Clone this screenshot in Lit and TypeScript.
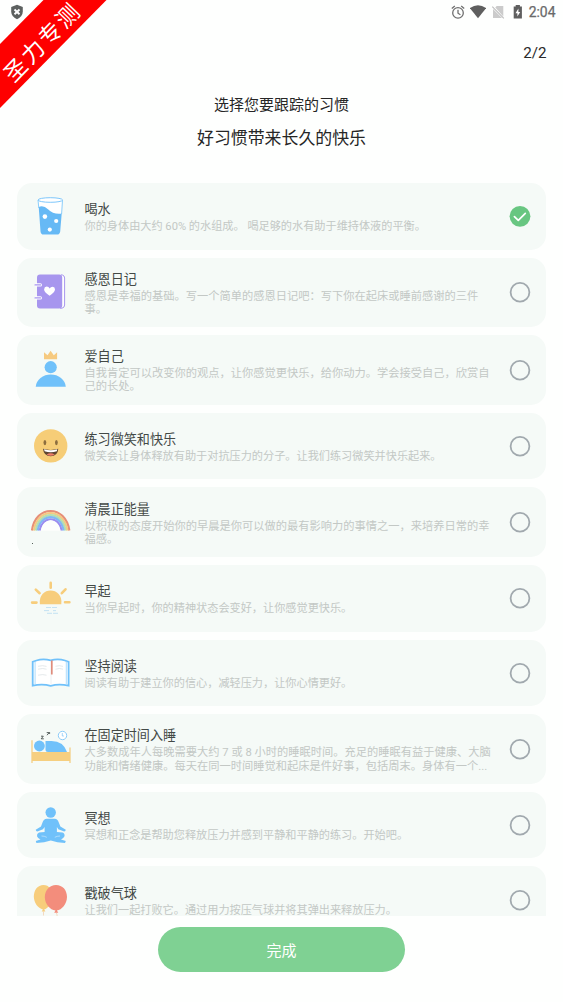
import { LitElement, html, svg, css } from "lit";
import { customElement, property, state } from "lit/decorators.js";

const BLUE = "#70c1fa";
const YELLOW = "#f7cd7c";

const icons: Record<string, unknown> = {
  water: svg`
    <path d="M9 6.5 11.6 38.5Q11.9 41.4 14.5 41.4H28Q30.6 41.4 31 38.5L33.5 6.5Z" fill="#fff"/>
    <path d="M9.7 14Q14.5 12 19 16.2 24.5 21.8 32.7 20.6L31.2 38.4Q30.8 41.5 28 41.5H14.6Q11.8 41.5 11.5 38.4Z" fill="#66b9f5"/>
    <path d="M9 7 9.8 15M33.5 7 32.6 21" stroke="#70c1fa" fill="none" stroke-width=".8"/>
    <ellipse cx="21.3" cy="7" rx="12.3" ry="2.3" fill="#fff" stroke="#70c1fa" stroke-width=".9"/>
    <circle cx="15.9" cy="23.6" r="2.3" fill="#fff"/><circle cx="27.2" cy="28" r="2.1" fill="#fff"/><circle cx="20.8" cy="36.6" r="2.1" fill="#fff"/>`,
  journal: svg`
    <path d="M32 5.9H33.2Q35.6 6.6 35.6 9V36Q35.6 38.6 33 39.2H31" fill="#fff" stroke="#a796ee" stroke-width="1"/>
    <rect x="8" y="5.5" width="25.2" height="34" rx="3" fill="#a796ee"/>
    <rect x="5.5" y="14.2" width="7.5" height="3.4" rx="1.7" fill="#fff"/><rect x="5.5" y="27.2" width="7.5" height="3.4" rx="1.7" fill="#fff"/>
    <path d="M6 15.9H11.6M6 28.9H11.6" stroke="#a796ee" stroke-width="1.2" stroke-linecap="round"/>
    <path d="M20.6 26.7Q15.2 23.4 15.1 20.5 15.2 17.8 17.7 17.6 19.8 17.7 20.6 19.5 21.6 17.7 23.7 17.7 26 18 26 20.5 25.8 23.4 20.6 26.7Z" fill="#fff"/>`,
  self: svg`
    <path d="M15 5.2 18.5 8.2 21.6 3.8 24.8 8.2 28.1 5.2V12.2H15Z" fill="#f6ca80"/>
    <circle cx="21.7" cy="20.2" r="6.1" fill=${BLUE}/>
    <path d="M6.7 39.8Q7 34.8 11.5 31 16 27.6 21.7 27.6 27.6 27.6 32 31 36.5 34.8 36.8 39.8Z" fill=${BLUE}/>`,
  smile: svg`
    <circle cx="21.7" cy="22.9" r="16.7" fill="#f6cd77"/>
    <ellipse cx="15.9" cy="19.6" rx="1.4" ry="2.6" fill="#8c6d3e"/><ellipse cx="27.4" cy="19.6" rx="1.4" ry="2.6" fill="#8c6d3e"/>
    <path d="M14 25.8Q21.7 28 29.3 25.8 28.7 33.2 21.7 33.2 14.7 33.2 14 25.8Z" fill="#5e4530"/>
    <path d="M15 26.2Q21.7 28.2 28.3 26.2L27.8 28.3Q21.7 30 15.6 28.3Z" fill="#fff"/>
    <path d="M17.5 31.7Q21.5 28.8 25.8 31.7 21.6 34 17.5 31.7Z" fill="#ef7d68"/>`,
  rainbow: svg`
    <g fill="none" stroke-width="2.2">
      <path d="M3 31.5C6.5 5.5 36.5 5.5 40.3 31.5" stroke="#e68f78"/>
      <path d="M4.9 31.5C8 8.3 35 8.3 38.4 31.5" stroke="#f5c983"/>
      <path d="M6.8 31.5C9.8 11 33.4 11 36.5 31.5" stroke="#b5dfb0"/>
      <path d="M8.7 31.5C11.5 13.8 31.8 13.8 34.6 31.5" stroke="#81b8f4"/>
      <path d="M10.6 31.5C13.3 16.5 30 16.5 32.7 31.5" stroke="#9b8df0"/>
    </g><path d="M11.7 31.8C14.5 17.8 28.8 17.8 31.6 31.8Z" fill="#fdfefd"/>
    <rect x="3" y="44" width="1" height="1" fill="#55605a"/>`,
  sunrise: svg`
    <path d="M10.9 29.3C8.5 10.8 34.7 10.8 32.3 29.3Z" fill="#f7cd7c"/>
    <path d="M21.7 7.9V12.8M6.8 14.6 10.6 18.2M36.5 14.3 32.8 18.2M3.1 27.6H7.5M36 27.2H40.4" stroke="#f7cd7c" stroke-width="2.6" stroke-linecap="round"/>
    <path d="M17 32.5H29M15 35.6H21M24 35.6H27M18 38.3H29" stroke="#bfdff2" stroke-width=".9" stroke-dasharray="5 1"/>`,
  book: svg`
    <path d="M3.7 11.8 7.4 10.5Q14 8.2 21.7 10.3 29 8.2 36 10.5L39.6 11.8V35.7Q30 33.6 21.7 35.8 13 33.6 3.7 35.7Z" fill="#fff" stroke=${BLUE} stroke-width="1.8"/>
    <path d="M6.1 11.2V34M37.3 11.2V34" stroke="#9bd3fb" stroke-width=".8"/>
    <path d="M22 12V34" stroke="#edf0f2"/><path d="M22.8 10.5V24.5" stroke="#df8c7c" stroke-width="1.7"/>
    <path d="M9 16.3Q14 15 17.5 16.4M9 19.2Q14 17.8 17.5 19.2M9 25.2Q14 24 17.5 25.2M26.5 16.3Q30.5 15 34 16.4M26.5 19.2Q30.5 17.8 34 19.2" fill="none" stroke="#d9e0e2" stroke-width=".7"/>`,
  sleep: svg`
    <path d="M3 14.3V37M41 21.5V37" stroke="#f3cf86" stroke-width="1.3"/>
    <path d="M3 26H41V35H3Z" fill="#f6cf80"/>
    <circle cx="10.4" cy="20" r="5.4" fill=${BLUE}/>
    <path d="M16.5 14.9H22.5Q34.5 15 38 26H19Q16.5 26 16.5 23.5Z" fill=${BLUE}/>
    <circle cx="33.5" cy="9.5" r="4.2" fill="#fff" stroke="#8dccf8"/><path d="M33.3 7V10H34.9" stroke="#8dccf8" fill="none" stroke-width=".8"/>
    <path d="M12 10.2H14.3L12.2 12.8H14.8M17.7 6.6H20.2L18 9.2M20.6 6.2V8" fill="none" stroke="#47514f" stroke-width=".9"/>`,
  meditate: svg`
    <circle cx="21.7" cy="10.5" r="5.2" fill=${BLUE}/>
    <path d="M17.6 16.8H25.8Q28.6 17 29.7 20.2L31.4 24.6 36.8 27.8Q36.5 29.8 34.5 29.3L29.3 27.2 27.9 25V30L33.5 30.6Q36 31.6 35.5 34.2 34.7 36.3 32 37.4L36.8 39.1 36 41Q28 40.7 21.8 38.4 15.5 40.7 7.4 41L6.8 39.1 11.5 37.4Q8.6 36.2 8 34.2 7.6 31.6 10 30.6L15.6 30V25L14 27.2 9 29.3Q7 29.8 6.7 27.8L12 24.6 13.6 20.2Q14.8 17 17.6 16.8Z" fill=${BLUE}/>
    <path d="M12.5 34Q15.5 34 17.8 35.3M31 34Q28 34 25.8 35.3" stroke="#d7edfb" stroke-width=".6" fill="none"/>`,
  balloons: svg`
    <path d="M14.5 8C20 8 24 12.8 23.8 20 23.2 27 18.8 31.2 15.2 32.6L16.4 34.6H12.7L13.9 32.6C9 31.2 4.9 26 4.8 19.6 5 13 8.5 8 14.5 8Z" fill=${YELLOW}/>
    <path d="M27 8C33.5 8 38 13 38 19.9 37.8 27.2 32.8 32.6 27.9 33.6L29.3 35.8H25.2L26.5 33.6C21 32.7 16 27.2 15.8 20.2 16 13 20.5 8 27 8Z" fill="#f38d7c"/>
    <path d="M14.5 34.6V38.5M27.3 35.8Q28.7 38 27.8 40" stroke="#f2c49c" stroke-width=".6" fill="none"/>`,
};

interface Habit {
  icon: string;
  title: string;
  text: string;
  tall?: boolean;
}

const HABITS: Habit[] = [
  { icon: "water", title: "喝水", text: "你的身体由大约 60% 的水组成。 喝足够的水有助于维持体液的平衡。" },
  { icon: "journal", title: "感恩日记", text: "感恩是幸福的基础。写一个简单的感恩日记吧：写下你在起床或睡前感谢的三件事。", tall: true },
  { icon: "self", title: "爱自己", text: "自我肯定可以改变你的观点，让你感觉更快乐，给你动力。学会接受自己，欣赏自己的长处。", tall: true },
  { icon: "smile", title: "练习微笑和快乐", text: "微笑会让身体释放有助于对抗压力的分子。让我们练习微笑并快乐起来。" },
  { icon: "rainbow", title: "清晨正能量", text: "以积极的态度开始你的早晨是你可以做的最有影响力的事情之一，来培养日常的幸福感。", tall: true },
  { icon: "sunrise", title: "早起", text: "当你早起时，你的精神状态会变好，让你感觉更快乐。" },
  { icon: "book", title: "坚持阅读", text: "阅读有助于建立你的信心，减轻压力，让你心情更好。" },
  { icon: "sleep", title: "在固定时间入睡", text: "大多数成年人每晚需要大约 7 或 8 小时的睡眠时间。充足的睡眠有益于健康、大脑功能和情绪健康。每天在同一时间睡觉和起床是件好事，包括周末。身体有一个...", tall: true },
  { icon: "meditate", title: "冥想", text: "冥想和正念是帮助您释放压力并感到平静和平静的练习。开始吧。" },
  { icon: "balloons", title: "戳破气球", text: "让我们一起打败它。通过用力按压气球并将其弹出来释放压力。" },
];

@customElement("habit-card")
class HabitCard extends LitElement {
  @property({ attribute: false }) habit!: Habit;
  @property({ type: Boolean }) checked = false;

  static styles = css`
    :host { display: block; flex: none; }
    .card {
      box-sizing: border-box;
      display: flex;
      align-items: center;
      height: 66.8px;
      padding: 0 15.3px 0 12.5px;
      border-radius: 15px;
      background: #f5faf7;
      cursor: pointer;
    }
    .icon { flex: none; width: 44px; height: 46px; }
    .body { flex: none; width: 410px; margin-left: 11.5px; padding-top: 1px; }
    .title { font-size: 13.1px; line-height: 20px; color: #434946; }
    .text { font-size: 11.17px; line-height: 13.1px; color: #c3c8c5; }
    .tall { height: 69.6px; }
    .tall .text { font-size: 11.25px; }
    .mark { flex: none; width: 22px; height: 22px; margin-left: auto; }
  `;

  render() {
    const { icon, title, text, tall } = this.habit;
    return html`
      <div class="card ${tall ? "tall" : ""}">
        <svg class="icon" viewBox="0 0 44 46">${icons[icon]}</svg>
        <div class="body">
          <div class="title">${title}</div>
          <div class="text">${text}</div>
        </div>
        <svg class="mark" viewBox="0 0 22 22">
          ${this.checked
            ? svg`<circle cx="11" cy="11.3" r="10.4" fill="#68c681"/><path d="M5.4 11.6 9.3 15.3 16.3 8.3" fill="none" stroke="#fff" stroke-width="1.7" stroke-linecap="round" stroke-linejoin="round"/>`
            : svg`<circle cx="11" cy="11.3" r="9.4" fill="none" stroke="#a1a9ae" stroke-width="1.8"/>`}
        </svg>
      </div>`;
  }
}

@customElement("app-root")
class AppRoot extends LitElement {
  @state() private selected = new Set<number>([0]);

  static styles = css`
    :host {
      display: flex;
      flex-direction: column;
      position: relative;
      box-sizing: border-box;
      width: 100%;
      height: 1002px;
      overflow: hidden;
      background: #fefffe;
      font-family: Roboto, "Noto Sans CJK SC", sans-serif;
    }
    .status {
      display: flex;
      align-items: center;
      flex: none;
      height: 23px;
      padding: 0 7.5px 0 9px;
      color: #6a6a6a;
    }
    .glyph { width: 16px; height: 16px; flex: none; }
    .spacer { flex: 1; }
    .tray { display: flex; align-items: center; gap: 4px; height: 22px; }
    .clock { font-size: 13.9px; line-height: 22px; margin-left: -1px; -webkit-text-stroke: .25px #6a6a6a; }
    .step {
      flex: none;
      height: 60px;
      line-height: 60px;
      padding-right: 16.5px;
      text-align: right;
      font-size: 15.2px;
      color: #2a2a2a;
    }
    .heading { flex: none; text-align: center; color: #262626; }
    .lead { font-size: 15px; line-height: 24px; padding-top: 10px; }
    .sub { font-size: 16.9px; line-height: 26px; padding-top: 8px; }
    .list {
      flex: none;
      display: flex;
      flex-direction: column;
      gap: 7.9px;
      height: 733.3px;
      margin-top: 32px;
      padding: 0 17px 0 16.5px;
      overflow: hidden;
    }
    .footer { flex: none; display: flex; justify-content: center; padding-top: 10.5px; }
    .done {
      width: 247.5px;
      height: 45px;
      border: 0;
      padding: 0;
      border-radius: 23px;
      background: #7fd193;
      color: #fff;
      font: inherit;
      font-size: 15px;
    }
    .ribbon { position: absolute; left: 0; top: 0; width: 108px; height: 110px; pointer-events: none; }
    .ribbon-text { font-family: "Noto Sans CJK SC", sans-serif; font-size: 22.5px; letter-spacing: 2.4px; fill: #fff; }
  `;

  private toggle(i: number) {
    const next = new Set(this.selected);
    next.has(i) ? next.delete(i) : next.add(i);
    this.selected = next;
  }

  render() {
    return html`
      <div class="status">
        <svg class="glyph" viewBox="0 0 16 16">
          <path d="M8 .8 13.8 3V7.5Q13.7 12.6 8 15.2 2.3 12.6 2.2 7.5V3Z" fill="#5d6160"/>
          <path d="M5.5 5.5 10.5 10.3M10.5 5.5 5.5 10.3" stroke="#fff" stroke-width="1.9"/>
        </svg>
        <div class="spacer"></div>
        <div class="tray">
          <svg class="glyph" viewBox="0 0 16 16" fill="none" stroke="#6f6f6f" stroke-width="1.3">
            <circle cx="8" cy="8.9" r="5.3"/><path d="M8 5.8V9.2L10.4 10.7M1.8 4.4 4.8 1.9M14.2 4.4 11.2 1.9"/>
          </svg>
          <svg class="glyph" viewBox="0 0 16 16"><path d="M-.2 4.1Q8-1.8 16.2 4.1L8 14.2Z" fill="#5f5f5f"/></svg>
          <svg class="glyph" viewBox="0 0 16 16">
            <path d="M6.7 2H13.3V12.4L5.3 3.4ZM3 5 12 14H3Z" fill="#cbcbcb"/><path d="M2.3 2.6 13.8 14.3" stroke="#bdbdbd" stroke-width="1.1"/>
          </svg>
          <svg class="glyph" viewBox="0 0 16 16">
            <path d="M3.7 2.6H5.7V1H9.9V2.6H11.9V14.6H3.7Z" fill="#5f5f5f"/><path d="M8.4 4.6 5.5 9.2H7.4V12.6L10.2 8H8.4Z" fill="#fff"/>
          </svg>
          <div class="clock">2:04</div>
        </div>
      </div>
      <div class="step">2/2</div>
      <div class="heading lead">选择您要跟踪的习惯</div>
      <div class="heading sub">好习惯带来长久的快乐</div>
      <div class="list">
        ${HABITS.map((h, i) => html`<habit-card .habit=${h} ?checked=${this.selected.has(i)} @click=${() => this.toggle(i)}></habit-card>`)}
      </div>
      <div class="footer"><button class="done">完成</button></div>
      <svg class="ribbon" viewBox="0 0 108 110">
        <path d="M43.5 0H106.5L0 108V44Z" fill="#fe0000"/>
        <text class="ribbon-text" text-anchor="middle" transform="translate(42.5 42) rotate(-46)" x="0" y="8">圣力专测</text>
      </svg>`;
  }
}
